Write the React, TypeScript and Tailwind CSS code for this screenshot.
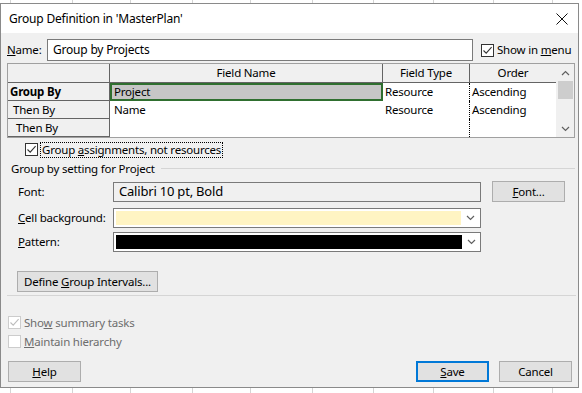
import React from "react";

const gridLines = [10, 72, 130, 192, 250, 312, 373, 433, 493, 552];

function Check({ checked, disabled }: { checked?: boolean; disabled?: boolean }) {
  return (
    <span
      className={`flex h-[13px] w-[13px] shrink-0 items-center justify-center border bg-white ${
        disabled ? "border-[#cccccc]" : "border-[#333333]"
      }`}
    >
      {checked && (
        <svg width="11" height="11" viewBox="0 0 11 11">
          <path d="M1.5 5.5 L4.2 8.2 L9.6 2.2" fill="none" stroke={disabled ? "#bcbcbc" : "#333333"} strokeWidth="1.1" />
        </svg>
      )}
    </span>
  );
}

function Chevron({ up }: { up?: boolean }) {
  return (
    <svg width="9" height="6" viewBox="0 0 9 6">
      <path d={up ? "M1 5 L4.5 1.5 L8 5" : "M1 1 L4.5 4.5 L8 1"} fill="none" stroke="#606060" strokeWidth="1.2" />
    </svg>
  );
}

function Btn({ children, w, primary }: { children: React.ReactNode; w: string; primary?: boolean }) {
  return (
    <button
      className={`flex h-[21px] items-center justify-center bg-[#e1e1e1] text-black ${w} ${
        primary ? "border-2 border-[#0078d7]" : "border border-[#adadad]"
      }`}
    >
      <span className="whitespace-nowrap">{children}</span>
    </button>
  );
}

export default function App() {
  return (
    <div className="relative h-[393px] w-[582px] overflow-hidden bg-white" style={{ fontFamily: "'Noto Sans', 'Open Sans', sans-serif" }}>
      {/* sheet behind the dialog */}
      <div className="absolute inset-0">
        {gridLines.map((x) => (
          <div key={x} className="absolute top-0 h-full w-px bg-[#d4d4d4]" style={{ left: x }} />
        ))}
      </div>

      {/* dialog window */}
      <div className="relative mt-[3px] flex h-[385px] w-[579px] flex-col border border-[#8a8a8a] bg-[#f0f0f0] text-[11.5px] leading-none tracking-[-0.2px] text-black">
        {/* title bar */}
        <div className="flex h-[29px] shrink-0 items-center justify-between bg-white pl-[8px] pr-[10px]">
          <span className="text-[12px]">Group Definition in 'MasterPlan'</span>
          <svg width="12" height="12" viewBox="0 0 12 12">
            <path d="M0.5 0.5 L11.5 11.5 M11.5 0.5 L0.5 11.5" stroke="#111" strokeWidth="1" />
          </svg>
        </div>

        <div className="flex flex-col pl-[6px] pr-[3px]">
          {/* name row */}
          <div className="mt-[6px] flex h-[22px] items-center whitespace-nowrap">
            <span className="w-[40px]">
              <u>N</u>ame:
            </span>
            <div className="flex h-[22px] w-[426px] items-center border border-[#7a7a7a] bg-white pl-[5px] text-[12px]">Group by Projects</div>
            <div className="ml-[8px] flex items-center gap-[3px]">
              <Check checked />
              <span>
                Show in <u>m</u>enu
              </span>
            </div>
          </div>

          {/* group grid */}
          <div className="mt-[2px] flex h-[75px] w-[568px] border border-[#a0a0a0] bg-white">
            <div className="flex flex-1 flex-col">
              <div className="flex h-[19px] border-b border-[#646464] bg-[#f0f0f0]">
                <div className="w-[102px] border-r border-[#646464]" />
                <div className="flex w-[273px] items-center justify-center border-r border-[#646464]">Field Name</div>
                <div className="flex w-[87px] items-center justify-center border-r border-[#646464]">Field Type</div>
                <div className="flex flex-1 items-center justify-center">Order</div>
              </div>
              {[
                { label: "Group By", pad: "pl-[2px] font-bold", field: "Project", sel: true },
                { label: "Then By", pad: "pl-[5px]", field: "Name" },
                { label: "Then By", pad: "pl-[8px]", field: "" },
              ].map((r, i) => (
                <div key={i} className="flex h-[18px]">
                  <div className={`flex w-[102px] items-center border-r border-b border-[#646464] bg-[#f0f0f0] ${r.pad}`}>{r.label}</div>
                  {r.sel ? (
                    <div className="flex w-[273px] items-center border-2 border-[#2f6f2f] bg-[#c6c6c6] pl-[2px]">{r.field}</div>
                  ) : (
                    <div className="flex w-[273px] items-center pl-[4px]">{r.field}</div>
                  )}
                  <div className="flex w-[87px] items-center border-r border-dotted border-black pl-[2px]">
                    {i < 2 ? "Resource" : ""}
                  </div>
                  <div className="flex flex-1 items-center pl-[2px]">{i < 2 ? "Ascending" : ""}</div>
                </div>
              ))}
            </div>
            {/* scrollbar */}
            <div className="flex w-[18px] flex-col items-center bg-[#f0f0f0]">
              <div className="flex h-[17px] items-center">
                <Chevron up />
              </div>
              <div className="h-[18px] w-[15px] bg-[#cdcdcd]" />
              <div className="flex-1" />
              <div className="flex h-[17px] items-center">
                <Chevron />
              </div>
            </div>
          </div>

          {/* group assignments */}
          <div className="mt-[4px] flex items-center pl-[18px]">
            <Check checked />
            <span className="ml-[2px] border border-dotted border-black px-[1px] py-px">
              Group <u>a</u>ssignments, not resources
            </span>
          </div>

          {/* settings group */}
          <div className="mt-[5px] flex items-center gap-[6px] pl-[4px]">
            <span>Group by setting for Project</span>
            <div className="h-px flex-1 bg-[#d5d5d5]" />
          </div>

          <div className="mt-[7px] flex items-center pl-[11px]">
            <span className="w-[95px]">Font:</span>
            <div className="flex h-[20px] w-[368px] items-center border border-[#7a7a7a] pl-[5px] text-[13px]">Calibri 10 pt, Bold</div>
            <div className="ml-[11px]">
              <Btn w="w-[73px]">
                <u>F</u>ont...
              </Btn>
            </div>
          </div>

          <div className="mt-[6px] flex items-center pl-[11px]">
            <span className="w-[95px] whitespace-nowrap">
              <u>C</u>ell background:
            </span>
            <div className="flex h-[20px] w-[368px] items-center border border-[#7a7a7a] bg-white pl-[2px]">
              <div className="h-[14px] w-[345px] bg-[#fff4c3]" />
              <div className="flex flex-1 justify-center">
                <Chevron />
              </div>
            </div>
          </div>

          <div className="mt-[4px] flex items-center pl-[11px]">
            <span className="w-[95px]">
              <u>P</u>attern:
            </span>
            <div className="flex h-[20px] w-[368px] items-center border border-[#7a7a7a] bg-white pl-[2px]">
              <div className="h-[14px] w-[346px] bg-black" />
              <div className="flex flex-1 justify-center">
                <Chevron />
              </div>
            </div>
          </div>

          <div className="mt-[19px] pl-[10px]">
            <Btn w="w-[141px]">
              Define <u>G</u>roup Intervals...
            </Btn>
          </div>

          <div className="mt-[3px] h-px w-[569px] bg-[#d5d5d5]" />

          <div className="mt-[20px] flex items-center gap-[3px] pl-px text-[#6d6d6d]">
            <Check checked disabled />
            <span>
              Sho<u>w</u> summary tasks
            </span>
          </div>
          <div className="mt-[6px] flex items-center gap-[3px] pl-px text-[#6d6d6d]">
            <Check disabled />
            <span>
              <u>M</u>aintain hierarchy
            </span>
          </div>

          <div className="mt-[13px] flex items-center pl-px">
            <Btn w="w-[73px]">
              <u>H</u>elp
            </Btn>
            <div className="flex-1" />
            <Btn w="w-[73px]" primary>
              <u>S</u>ave
            </Btn>
            <div className="ml-[10px] mr-[3px]">
              <Btn w="w-[73px]">Cancel</Btn>
            </div>
          </div>
        </div>
      </div>
    </div>
  );
}
